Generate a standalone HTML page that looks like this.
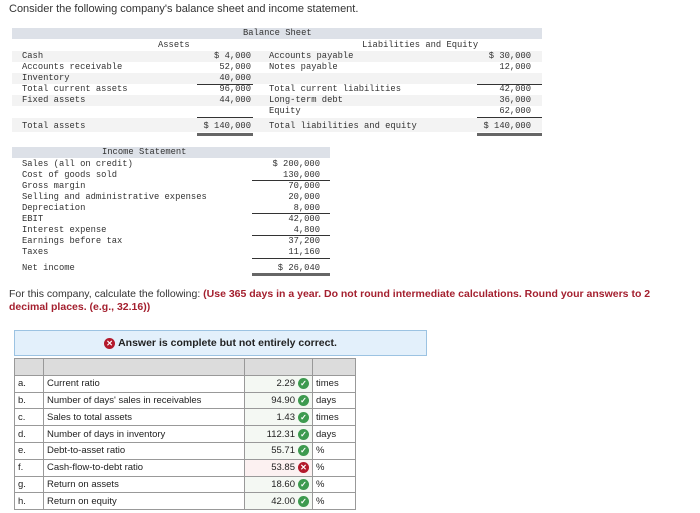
<!DOCTYPE html>
<html><head><meta charset="utf-8"><style>
body{margin:0;width:700px;height:513px;background:#fff;position:relative;overflow:hidden;font-family:"Liberation Sans",sans-serif}
.a{position:absolute;white-space:nowrap}
.m{font-family:"Liberation Mono",monospace;font-size:8.8px;color:#333;line-height:11px}
.r{text-align:right}
.bar{position:absolute;background:#dde1e8}
.ul{position:absolute;height:1px;background:#333}
.dl{position:absolute;height:3px;background:#666}
.sh{position:absolute;background:#f3f3f3}
table{position:absolute;left:14px;top:358px;border-collapse:collapse;font-size:9.5px;color:#222}
td{border:1px solid #999;height:15.8px;padding:0 3px}
.ck{display:inline-block;width:11px;height:11px;border-radius:50%;background:#3d9a4f;color:#fff;font-size:8px;line-height:11px;text-align:center;vertical-align:middle;margin-left:3px;font-weight:bold}
.x{background:#b3192b}
</style></head><body>
<div class="a" style="left:9px;top:3px;font-size:11px;color:#333">Consider the following company's balance sheet and income statement.</div>

<div class="bar" style="left:12px;top:28px;width:530px;height:11px"></div>
<div class="sh" style="left:12px;top:51px;width:530px;height:11px"></div>
<div class="sh" style="left:12px;top:73px;width:530px;height:11px"></div>
<div class="sh" style="left:12px;top:95px;width:530px;height:11px"></div>
<div class="sh" style="left:12px;top:118px;width:530px;height:14px"></div>
<div class="a m" style="left:243px;top:28px">Balance Sheet</div>
<div class="a m" style="left:158px;top:40px">Assets</div>
<div class="a m" style="left:362px;top:40px">Liabilities and Equity</div>
<div class="a m" style="left:22px;top:51px">Cash<br>Accounts receivable<br>Inventory<br>Total current assets<br>Fixed assets</div>
<div class="a m r" style="left:190px;width:61px;top:51px">$ 4,000<br>52,000<br>40,000<br>96,000<br>44,000</div>
<div class="a m" style="left:22px;top:121px">Total assets</div>
<div class="a m r" style="left:190px;width:61px;top:121px">$ 140,000</div>
<div class="ul" style="left:197px;top:84px;width:56px"></div>
<div class="ul" style="left:197px;top:117px;width:56px"></div>
<div class="dl" style="left:197px;top:133px;width:56px"></div>
<div class="a m" style="left:269px;top:51px">Accounts payable<br>Notes payable<br><br>Total current liabilities<br>Long-term debt<br>Equity</div>
<div class="a m" style="left:269px;top:121px">Total liabilities and equity</div>
<div class="a m r" style="left:470px;width:61px;top:51px">$ 30,000<br>12,000<br><br>42,000<br>36,000<br>62,000</div>
<div class="a m r" style="left:470px;width:61px;top:121px">$ 140,000</div>
<div class="ul" style="left:477px;top:84px;width:65px"></div>
<div class="ul" style="left:477px;top:117px;width:65px"></div>
<div class="dl" style="left:477px;top:133px;width:65px"></div>

<div class="bar" style="left:12px;top:147px;width:318px;height:11px"></div>
<div class="a m" style="left:102px;top:147px">Income Statement</div>
<div class="a m" style="left:22px;top:158.5px;line-height:11.1px">Sales (all on credit)<br>Cost of goods sold<br>Gross margin<br>Selling and administrative expenses<br>Depreciation<br>EBIT<br>Interest expense<br>Earnings before tax<br>Taxes</div>
<div class="a m r" style="left:250px;width:70px;top:158.5px;line-height:11.1px">$ 200,000<br>130,000<br>70,000<br>20,000<br>8,000<br>42,000<br>4,800<br>37,200<br>11,160</div>
<div class="a m" style="left:22px;top:263px">Net income</div>
<div class="a m r" style="left:250px;width:70px;top:263px">$ 26,040</div>
<div class="ul" style="left:252px;top:180px;width:78px"></div>
<div class="ul" style="left:252px;top:213px;width:78px"></div>
<div class="ul" style="left:252px;top:235px;width:78px"></div>
<div class="ul" style="left:252px;top:258px;width:78px"></div>
<div class="dl" style="left:252px;top:273px;width:78px"></div>

<div class="a" style="left:9px;top:288px;font-size:10.5px;color:#333;line-height:13px;width:678px;white-space:normal">For this company, calculate the following: <b style="color:#a4202f">(Use 365 days in a year. Do not round intermediate calculations. Round your answers to 2 decimal places. (e.g., 32.16))</b></div>

<div class="a" style="left:14px;top:330px;width:411px;height:24px;background:#e3f0fb;border:1px solid #9cc3e2;font-size:10.5px;font-weight:bold;color:#222;text-align:center;line-height:24px"><span class="ck x" style="margin:0 3px 0 0">✕</span>Answer is complete but not entirely correct.</div>

<table>
<tr style="background:#dcdcdc"><td style="width:22px"></td><td style="width:194px"></td><td style="width:61px"></td><td style="width:36px"></td></tr>
<tr><td>a.</td><td>Current ratio</td><td class="r" style="background:#f4f8f3">2.29<span class="ck">✓</span></td><td>times</td></tr>
<tr><td>b.</td><td>Number of days' sales in receivables</td><td class="r" style="background:#f4f8f3">94.90<span class="ck">✓</span></td><td>days</td></tr>
<tr><td>c.</td><td>Sales to total assets</td><td class="r" style="background:#f4f8f3">1.43<span class="ck">✓</span></td><td>times</td></tr>
<tr><td>d.</td><td>Number of days in inventory</td><td class="r" style="background:#f4f8f3">112.31<span class="ck">✓</span></td><td>days</td></tr>
<tr><td>e.</td><td>Debt-to-asset ratio</td><td class="r" style="background:#f4f8f3">55.71<span class="ck">✓</span></td><td>%</td></tr>
<tr><td>f.</td><td>Cash-flow-to-debt ratio</td><td class="r" style="background:#fcf1f1">53.85<span class="ck x">✕</span></td><td>%</td></tr>
<tr><td>g.</td><td>Return on assets</td><td class="r" style="background:#f4f8f3">18.60<span class="ck">✓</span></td><td>%</td></tr>
<tr><td>h.</td><td>Return on equity</td><td class="r" style="background:#f4f8f3">42.00<span class="ck">✓</span></td><td>%</td></tr>
</table>
</body></html>
